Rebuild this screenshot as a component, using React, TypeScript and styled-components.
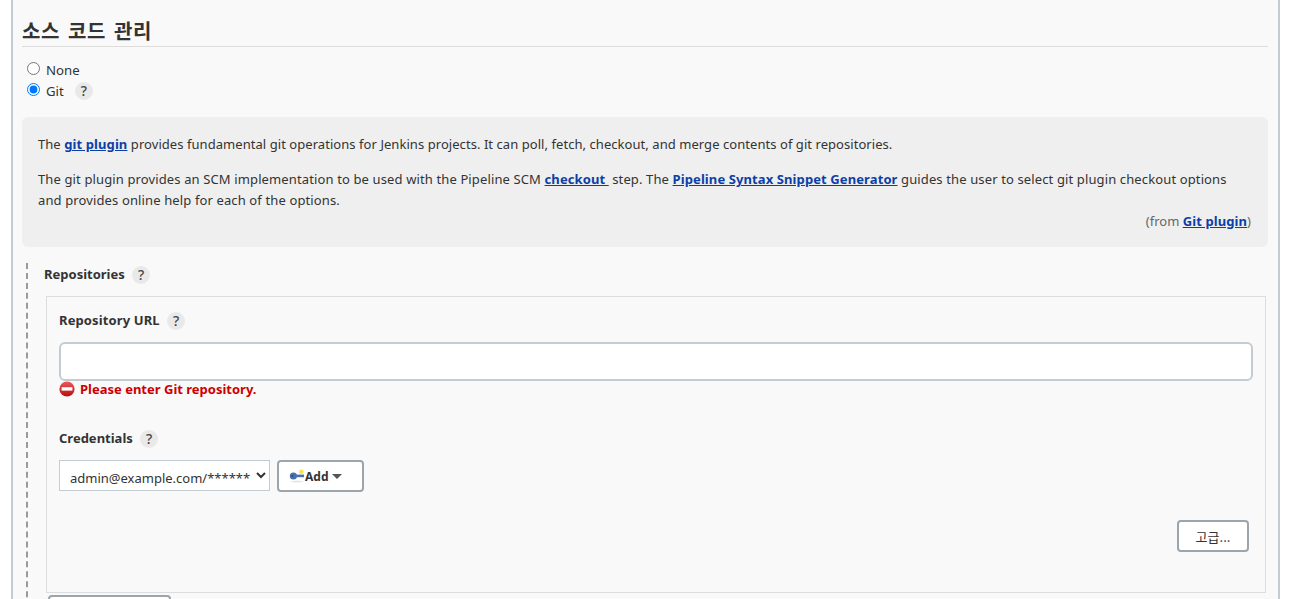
import React from 'react';
import styled, {createGlobalStyle} from 'styled-components';

const GlobalStyle = createGlobalStyle`
  html, body {
    margin: 0;
    padding: 0;
    height: 599px;
    overflow: hidden;
    background: #fff;
  }
  body {
    font-family: "Noto Sans", "Noto Sans CJK KR", sans-serif;
    font-size: 13px;
    color: #333;
  }
`

const HelpButton = () => <Help>?</Help>

const KeyIcon = () => (
    <svg width="16" height="14" viewBox="0 0 16 14">
        <ellipse cx="8" cy="12.6" rx="6.5" ry="1" fill="#e6e6e6"/>
        <path d="M5 5.6h10v2.6H5z" fill="#4a70ac"/>
        <circle cx="4.4" cy="7" r="3.6" fill="#4a70ac"/>
        <circle cx="3.4" cy="7" r="1" fill="#2c4a80"/>
        <circle cx="12.4" cy="2.8" r="2.4" fill="#f5e94a"/>
    </svg>
)

const StopIcon = () => (
    <svg width="16" height="16" viewBox="0 0 16 16">
        <defs>
            <linearGradient id="stop" x1="0" y1="0" x2="0" y2="1">
                <stop offset="0" stopColor="#ec5a5a"/>
                <stop offset="1" stopColor="#b80d0d"/>
            </linearGradient>
        </defs>
        <circle cx="8" cy="8" r="7.6" fill="url(#stop)"/>
        <rect x="2.6" y="6.2" width="10.8" height="3.4" fill="#fff"/>
    </svg>
)

const CaretIcon = () => (
    <svg width="10" height="5" viewBox="0 0 10 5">
        <path d="M0 0h10L5 5z" fill="#555"/>
    </svg>
)

export default function App() {
    return (
        <>
            <GlobalStyle/>
            <Panel>
                <Heading>소스 코드 관리</Heading>
                <RadioGroup>
                    <RadioRow>
                        <Radio type="radio" name="scm"/>
                        <span>None</span>
                    </RadioRow>
                    <RadioRow>
                        <Radio type="radio" name="scm" defaultChecked/>
                        <span>Git</span>
                        <HelpButton/>
                    </RadioRow>
                </RadioGroup>
                <InfoBox>
                    <Para $tracking={0.055} $inset={0}>The <a href="#">git plugin</a> provides fundamental git operations for Jenkins projects. It can poll, fetch, checkout, and merge contents of git repositories.</Para>
                    <Para $tracking={0.125} $inset={8}>The git plugin provides an SCM implementation to be used with the Pipeline SCM <a href="#">checkout&nbsp;</a> step. The <a href="#">Pipeline Syntax Snippet Generator</a> guides the user to select git plugin checkout options and provides online help for each of the options.</Para>
                    <From>(from <a href="#">Git plugin</a>)</From>
                </InfoBox>
                <Section>
                    <SectionLabel>Repositories <HelpButton/></SectionLabel>
                    <RepoBox>
                        <UrlLabel>Repository URL <HelpButton/></UrlLabel>
                        <UrlInput type="text"/>
                        <ErrorRow><StopIcon/>Please enter Git repository.</ErrorRow>
                        <CredentialsLabel>Credentials <HelpButton/></CredentialsLabel>
                        <CredentialsRow>
                            <CredSelect defaultValue="admin">
                                <option value="admin">admin@example.com/******</option>
                            </CredSelect>
                            <AddButton><KeyIcon/>Add<CaretIcon/></AddButton>
                        </CredentialsRow>
                        <AdvancedRow>
                            <AdvancedButton>고급...</AdvancedButton>
                        </AdvancedRow>
                    </RepoBox>
                    <AddRepoButton/>
                </Section>
            </Panel>
        </>
    );
}

const Panel = styled.div`
  box-sizing: border-box;
  width: 1269px;
  height: 599px;
  margin-left: 11px;
  padding: 18px 10px 0 9px;
  overflow: hidden;
  background: #f9f9f9;
  border-left: 2px solid #c3ccd1;
  border-right: 2px solid #c3ccd1;
`
const Heading = styled.h2`
  margin: 0;
  height: 28px;
  font-size: 20px;
  line-height: 25px;
  letter-spacing: 0.7px;
  word-spacing: 2.5px;
  font-weight: 700;
  font-family: "Noto Sans CJK KR", "Noto Sans", sans-serif;
  color: #333;
  border-bottom: 1px solid #ddd;
`
const Help = styled.span`
  display: inline-flex;
  align-items: center;
  justify-content: center;
  width: 18px;
  height: 18px;
  margin-left: 4px;
  border-radius: 50%;
  background: #e9e9e9;
  font-size: 14px;
  font-weight: 500;
  color: #444;
  vertical-align: middle;
`
const RadioGroup = styled.div`
  margin: 12px 0 0 5px;
`
const RadioRow = styled.label`
  display: flex;
  align-items: center;
  height: 21px;
  font-size: 13.2px;

  ${Help} {
    margin-left: 11px;
  }
`
const Radio = styled.input`
  width: 13px;
  height: 13px;
  margin: 0 6px 3px 0;
`
const InfoBox = styled.div`
  box-sizing: border-box;
  height: 130px;
  margin-top: 16px;
  padding: 17px 16px 16px;
  background: #efefef;
  border-radius: 6px;
  line-height: 21px;

  a {
    color: #0b3fa8;
    font-weight: 700;
    letter-spacing: 0.1px;
    text-decoration: underline;
  }
`
const Para = styled.p<{$tracking: number; $inset: number}>`
  margin: 0 0 14px;
  padding-right: ${props => props.$inset}px;
  letter-spacing: ${props => props.$tracking}px;
`
const From = styled.div`
  margin-top: -14px;
  padding-right: 1px;
  text-align: right;
  color: #666;
`
const Section = styled.div`
  margin: 16px 0 0 4px;
  padding-left: 16px;
  border-left: 2px dashed #9a9a9a;
`
const SectionLabel = styled.div`
  height: 22px;
  line-height: 22px;
  font-weight: 700;
`
const RepoBox = styled.div`
  box-sizing: border-box;
  width: 1220px;
  height: 297px;
  margin: 11px 0 0 2px;
  padding: 12px 12px 0;
  border: 1px solid #ddd;
`
const FieldLabel = styled.div`
  height: 22px;
  line-height: 22px;
  font-weight: 700;
`
const UrlLabel = styled(FieldLabel)`
  letter-spacing: 0.12px;
`
const UrlInput = styled.input`
  display: block;
  box-sizing: border-box;
  width: 1194px;
  height: 39px;
  margin-top: 11px;
  background: #fff;
  border: 2px solid #c3ccd1;
  border-radius: 6px;
  outline: none;
`
const ErrorRow = styled.div`
  display: flex;
  align-items: center;
  gap: 5px;
  height: 16px;
  font-weight: 700;
  color: #cc0000;
`
const CredentialsLabel = styled(FieldLabel)`
  margin-top: 30px;
`
const CredentialsRow = styled.div`
  display: flex;
  gap: 7px;
  margin-top: 11px;
`
const CredSelect = styled.select`
  box-sizing: border-box;
  width: 211px;
  height: 31px;
  padding: 4px 0 0 10px;
  appearance: none;
  background: #fff url("data:image/svg+xml,%3Csvg xmlns='http://www.w3.org/2000/svg' width='10' height='7'%3E%3Cpath d='M1 1l4 4 4-4' fill='none' stroke='%23333' stroke-width='2'/%3E%3C/svg%3E") no-repeat 196px 11px;
  border: 1px solid #c3ccd1;
  border-radius: 0;
  font-family: inherit;
  font-size: 13px;
  color: #333;
`
const AddButton = styled.button`
  display: flex;
  align-items: center;
  box-sizing: border-box;
  width: 87px;
  height: 32px;
  padding: 0 0 0 10px;
  background: #fff;
  border: 2px solid #9aa5ae;
  border-radius: 4px;
  font-family: inherit;
  font-size: 12px;
  font-weight: 700;
  color: #333;

  svg:last-child {
    margin-left: 4px;
  }
`
const AdvancedRow = styled.div`
  display: flex;
  justify-content: flex-end;
  margin: 28px 4px 0 0;
`
const AdvancedButton = styled.button`
  box-sizing: border-box;
  width: 72px;
  height: 32px;
  padding: 0;
  background: #fff;
  border: 2px solid #9aa5ae;
  border-radius: 4px;
  font-family: "Noto Sans CJK KR", "Noto Sans", sans-serif;
  font-size: 13px;
  color: #333;
`
const AddRepoButton = styled.div`
  box-sizing: border-box;
  width: 123px;
  height: 32px;
  margin: 2px 0 0 4px;
  background: #fff;
  border: 2px solid #9aa5ae;
  border-radius: 4px;
`
